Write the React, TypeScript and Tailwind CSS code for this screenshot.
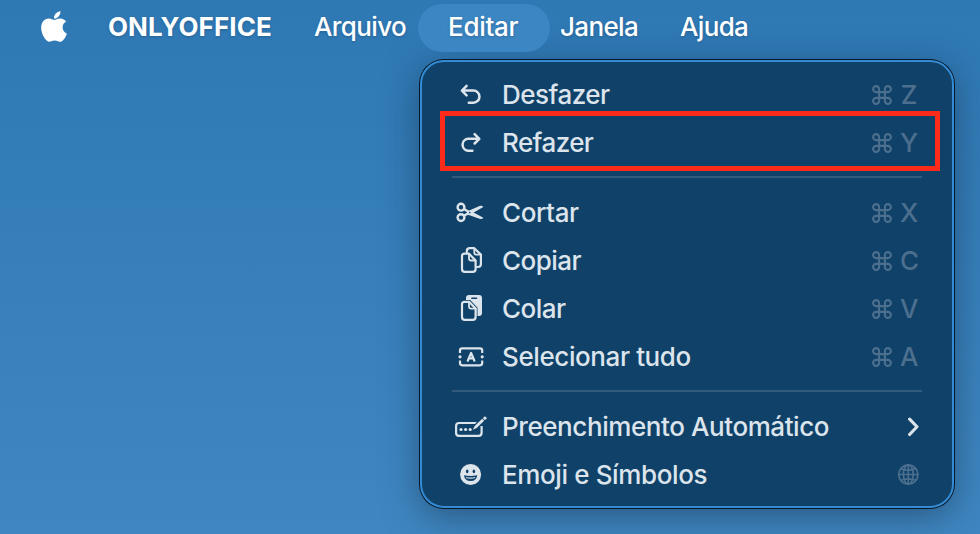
import React from 'react';
import { FaApple } from 'react-icons/fa';

type Item = {
  label: string;
  tracking: string;
  icon: React.ReactNode;
  shortcut?: string;
  trailing?: React.ReactNode;
};

const stroke = {
  fill: 'none',
  stroke: 'currentColor',
  strokeLinecap: 'round' as const,
  strokeLinejoin: 'round' as const,
};

function UndoIcon() {
  return (
    <svg width="36" height="32" viewBox="0 0 36 32" {...stroke} strokeWidth="2.5">
      <path d="M14.6 6.9 L9.9 11.6 L14.6 16.3 M10.4 11.6 H21.4 A6 6 0 0 1 21.4 23.7 H16.8" />
    </svg>
  );
}

function RedoIcon() {
  return (
    <svg width="36" height="32" viewBox="0 0 36 32" {...stroke} strokeWidth="2.5">
      <path d="M22.6 7.1 L27.3 11.8 L22.6 16.5 M26.8 11.8 H15.8 A6 6 0 0 0 15.8 23.7 H20.4" />
    </svg>
  );
}

function ScissorsIcon() {
  return (
    <svg width="36" height="32" viewBox="0 0 36 32" {...stroke} strokeWidth="2.4">
      <circle cx="9" cy="10.2" r="3.4" />
      <circle cx="9" cy="20.6" r="3.4" />
      <path d="M12 12 L17 15 M12 18.8 L17 15.8" />
      <path
        d="M15 14.4 L27.5 9 Q30.2 8.2 31.3 10 L19.5 16.8 L15 18.2 Z M18.8 14 L31.3 20.8 Q30.2 22.6 27.5 21.8 L15.4 17.4 Z"
        fill="currentColor"
        stroke="none"
      />
      <circle cx="17.8" cy="15.6" r="0.8" fill="#104168" stroke="none" />
    </svg>
  );
}

function CopyIcon() {
  return (
    <svg width="36" height="32" viewBox="0 0 36 32" {...stroke} strokeWidth="2.2">
      <path d="M14.8 7.3 V6.2 Q14.8 3.2 17.8 3.2 H22.3 L28.9 9.6 V19 Q28.9 22 26 22 H25" />
      <path d="M22.3 3.4 V7.5 Q22.3 9.7 24.5 9.7 H28.7" strokeWidth="1.8" />
      <path d="M10 11 Q10 8.7 12.4 8.7 H17 L23.6 15.4 V24 Q23.6 26.8 20.8 26.8 H12.8 Q10 26.8 10 24 Z" />
      <path d="M17 9 V13.4 Q17 15.5 19.1 15.5 H23.3" strokeWidth="1.8" />
    </svg>
  );
}

function PasteIcon() {
  return (
    <svg width="36" height="32" viewBox="0 0 36 32" {...stroke} strokeWidth="2.2">
      <rect x="14" y="2.1" width="16" height="20.9" rx="3" fill="currentColor" stroke="none" />
      <path d="M19.8 5.3 H24.6" stroke="#104168" strokeWidth="1.4" />
      {/* folha da frente, recortada sobre a prancheta */}
      <path d="M10 7.7 H18 L24.9 14.8 V24" stroke="#104168" strokeWidth="1.2" />
      <path d="M10 11.2 Q10 8.8 12.4 8.8 H17 L23.6 15.5 V24 Q23.6 26.8 20.8 26.8 H12.8 Q10 26.8 10 24 Z" fill="#104168" />
      <path d="M17 9.2 V13.6 Q17 15.7 19.1 15.7 H23.3" strokeWidth="1.8" />
    </svg>
  );
}

function SelectAllIcon() {
  return (
    <svg width="36" height="32" viewBox="0 0 36 32" {...stroke} strokeWidth="2.2">
      <path d="M8 11.9 V9.6 Q8 7.4 10.2 7.4 H28 Q30.2 7.4 30.2 9.6 V11.9 M8 19.6 V22.1 Q8 24.3 10.2 24.3 H28 Q30.2 24.3 30.2 22.1 V19.6" strokeLinecap="butt" />
      <circle cx="8" cy="15.8" r="1.6" fill="currentColor" stroke="none" />
      <circle cx="30.2" cy="15.8" r="1.6" fill="currentColor" stroke="none" />
      <path d="M15.8 19.7 L19.1 11.9 L22.4 19.7 M16.9 17.4 H21.3" strokeWidth="2.2" />
    </svg>
  );
}

function AutofillIcon() {
  return (
    <svg width="36" height="32" viewBox="0 0 36 32" {...stroke} strokeWidth="2.2">
      <path d="M25.5 12 H7 Q4.1 12 4.1 14.9 V22 Q4.1 24.9 7 24.9 H26.5 Q29.6 24.9 29.6 21.8 V15" strokeLinecap="butt" />
      <circle cx="9" cy="18.5" r="1.6" fill="currentColor" stroke="none" />
      <circle cx="13.6" cy="18.5" r="1.6" fill="currentColor" stroke="none" />
      <circle cx="18.2" cy="18.5" r="1.6" fill="currentColor" stroke="none" />
      <path d="M32 7.3 L23 16.2" stroke="#104168" strokeWidth="4.6" />
      <path d="M22.7 14.9 L30.2 7.8 L32.2 9.7 L24.7 17.1 L20.8 18.8 Z" fill="currentColor" stroke="none" />
      <circle cx="32.9" cy="7.2" r="1.6" fill="currentColor" stroke="none" />
    </svg>
  );
}

function EmojiIcon() {
  return (
    <svg width="36" height="32" viewBox="0 0 36 32" fill="#104168">
      <circle cx="18.6" cy="15.5" r="10.5" fill="#dce4ec" />
      <ellipse cx="15.2" cy="12.4" rx="1.3" ry="1.8" />
      <ellipse cx="21.9" cy="12.4" rx="1.3" ry="1.8" />
      <path d="M12 16.2 Q18.6 17.8 25.2 16.2 Q24.6 22 18.6 22 Q12.6 22 12 16.2 Z" />
      <path d="M13.7 17.9 Q18.6 18.9 23.5 17.9 L22.8 19.3 Q18.6 20.2 14.4 19.3 Z" fill="#dce4ec" />
    </svg>
  );
}

function CommandIcon() {
  return (
    <svg className="mb-px" width="20" height="20" viewBox="0 0 20 20" {...stroke} strokeWidth="2.1">
      <path d="M7.1 7.1 H4.3 A3 3 0 1 1 7.1 4.3 V15.7 A3 3 0 1 1 4.3 12.9 H15.7 A3 3 0 1 1 12.9 15.7 V4.3 A3 3 0 1 1 15.7 7.1 Z" />
    </svg>
  );
}

function ChevronIcon() {
  return (
    <svg className="mr-px" width="12" height="20" viewBox="0 0 12 20" {...stroke} strokeWidth="3.1">
      <path d="M2.6 2.1 L10 9.8 L2.6 17.5" />
    </svg>
  );
}

function GlobeIcon() {
  return (
    <svg className="mr-px text-[#4c6f8e]" width="22" height="22" viewBox="0 0 22 22" {...stroke} strokeWidth="1.7">
      <circle cx="11.3" cy="10.5" r="9.6" />
      <ellipse cx="11.3" cy="10.5" rx="4.9" ry="9.6" />
      <path d="M11.3 0.9 V20.1 M1.7 10.5 H20.9 M4 4.7 Q11.3 7.7 18.6 4.7 M4 16.3 Q11.3 13.3 18.6 16.3" />
    </svg>
  );
}

const groups: Item[][] = [
  [
    { label: 'Desfazer', tracking: 'tracking-[-0.5px]', icon: <UndoIcon />, shortcut: 'Z' },
    { label: 'Refazer', tracking: 'tracking-[-0.58px]', icon: <RedoIcon />, shortcut: 'Y' },
  ],
  [
    { label: 'Cortar', tracking: 'tracking-[-0.4px]', icon: <ScissorsIcon />, shortcut: 'X' },
    { label: 'Copiar', tracking: 'tracking-[-0.55px]', icon: <CopyIcon />, shortcut: 'C' },
    { label: 'Colar', tracking: 'tracking-[-0.5px]', icon: <PasteIcon />, shortcut: 'V' },
    { label: 'Selecionar tudo', tracking: 'tracking-[-0.4px]', icon: <SelectAllIcon />, shortcut: 'A' },
  ],
  [
    { label: 'Preenchimento Automático', tracking: 'tracking-[-0.42px]', icon: <AutofillIcon />, trailing: <ChevronIcon /> },
    { label: 'Emoji e Símbolos', tracking: 'tracking-[-0.38px]', icon: <EmojiIcon />, trailing: <GlobeIcon /> },
  ],
];

function MenuRow({ item }: { item: Item }) {
  return (
    <div className="flex h-12 items-center pl-[30px] pr-[32px]">
      <span className="w-9 shrink-0">{item.icon}</span>
      <span className={`ml-[14px] flex-1 whitespace-nowrap ${item.tracking}`}>{item.label}</span>
      {item.shortcut && (
        <span className="flex w-12 items-center text-[#4c6f8e]">
          <CommandIcon />
          <span className="w-[26px] pl-2 text-center">{item.shortcut}</span>
        </span>
      )}
      {item.trailing}
    </div>
  );
}

function MenuBar() {
  return (
    <nav className="flex h-[60px] items-start whitespace-nowrap pl-[40px] pt-1 font-medium text-white [text-shadow:0_1px_3px_rgba(0,0,0,0.2)]">
      <div className="flex h-[46px] w-[68px] items-center pb-px">
        <FaApple className="h-[35px] w-[28px]" />
      </div>
      <div className="flex h-[46px] w-[206px] items-center font-bold tracking-[0.08px]">ONLYOFFICE</div>
      <div className="flex h-[46px] w-[104px] items-center tracking-[-0.6px]">Arquivo</div>
      <div className="flex h-12 w-[132px] items-center rounded-full bg-[#3c86c3] pb-0.5 pl-[30px] tracking-[-0.3px]">Editar</div>
      <div className="flex h-[46px] w-[130px] items-center pl-[10px] tracking-[-0.65px]">Janela</div>
      <div className="flex h-[46px] items-center tracking-[-0.65px]">Ajuda</div>
    </nav>
  );
}

export default function App() {
  return (
    <div className="relative h-[534px] w-[980px] overflow-hidden bg-linear-to-b from-[#2e78b4] to-[#3f87c2] font-['Inter','Liberation_Sans',sans-serif] text-[26px] leading-8">
      <MenuBar />
      <div className="ml-[420px] h-[448px] w-[534px] rounded-[24px] border-2 border-[#348bd3] bg-[#104168] pt-[9px] font-medium text-[#dce4ec] shadow-[0_0_0_1px_#06192a,0_8px_36px_rgba(20,40,60,0.5)]">
        {groups.map((group, i) => (
          <div key={i}>
            {i > 0 && (
              <div className="flex h-[22px] items-start px-[30px] pt-[9px]">
                <div className="h-[2px] w-full bg-[#315a7d]" />
              </div>
            )}
            {group.map((item) => (
              <MenuRow key={item.label} item={item} />
            ))}
          </div>
        ))}
      </div>
      {/* marcação em volta de "Refazer" */}
      <div className="absolute left-[440px] top-[111px] h-[60px] w-[500px] border-5 border-[#ff2b1a]" />
    </div>
  );
}
